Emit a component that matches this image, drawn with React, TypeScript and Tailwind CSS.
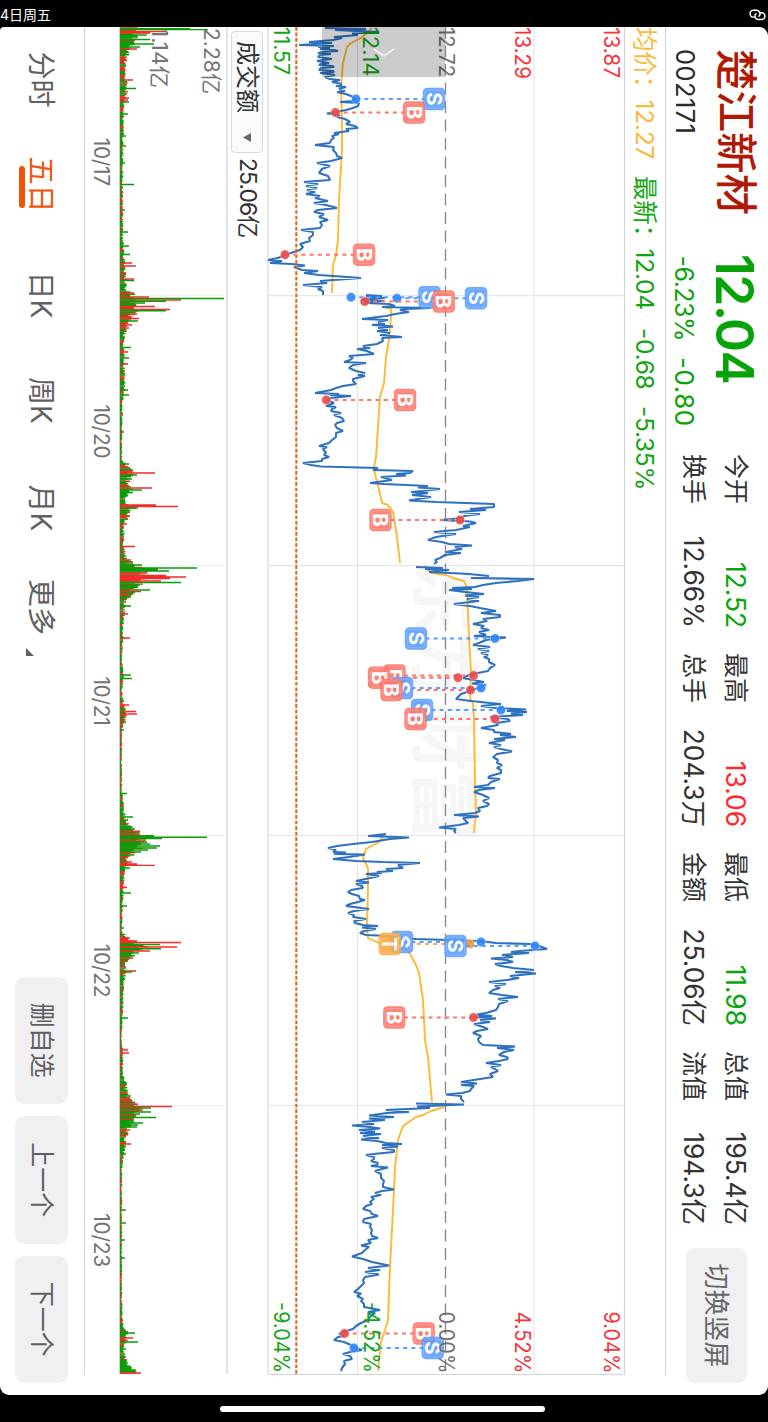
import React from 'react';

type Pt = [number, number];
type Side = 'B' | 'S' | 'T';

const START = 27;
const CHART_TOP = 625;

// Each session is a list of [time offset, price level] samples.
const PRICE: Pt[][] = [
  [
    [28, 325], [29, 366], [30, 335], [32, 379], [33.5, 352], [35, 358], [37, 334], [38, 342], [40, 333], [42, 309], [43, 332], [45, 299], [46, 334], [47, 318], [48, 330], [49, 320], [50, 334], [51, 338], [52, 322], [53, 318], [54, 331], [55, 320], [57, 318], [59, 332], [60, 322], [61, 317], [63, 329], [64, 321], [65, 319], [66, 332], [67, 334], [68, 321], [70, 319], [71, 333], [72, 334], [73, 320], [75, 335], [77, 325], [79, 330], [80, 340], [82, 332], [84, 342], [86, 336], [87, 346], [89, 339], [91, 345], [92, 337], [94, 346], [96, 351], [99, 356], [101, 352], [102, 340], [103, 359], [106, 358], [108, 353], [110, 346], [112, 336], [113.5, 327], [115, 340], [117, 337], [119, 345], [122, 350], [124, 346], [126, 355], [128, 358], [129, 346], [131, 349], [133, 334], [134, 339], [136, 332], [138, 334], [140, 331], [143, 330], [145, 315], [147, 334], [150, 333], [153, 336], [156, 337], [158, 342], [161, 331], [163, 317], [166, 330], [169, 322], [173, 319], [176, 328], [180, 330], [182, 304], [184, 318], [186, 306], [188, 317], [190, 307], [192, 315], [194, 306], [196, 320], [198, 315], [201, 328], [203, 314], [205, 326], [208, 337], [210, 318], [212, 314], [214, 324], [217, 319], [220, 328], [222, 320], [225, 322], [228, 320], [230, 301], [232, 313], [235, 313], [238, 309], [241, 310], [244, 300], [247, 303], [250, 300], [252, 294], [255, 285], [258, 278], [260, 268], [261, 282], [263, 270], [264, 292], [265.5, 305], [267, 294], [270, 302], [271, 318], [273, 304], [275, 319], [278, 361], [281, 320], [283, 327], [285, 303], [287, 322], [289, 318], [291, 323], [295, 323],
  ],
  [
    [295, 366], [296, 382], [297, 366], [298, 385], [300, 362], [301, 384], [303, 366], [304, 389], [306, 395], [307, 382], [308, 431], [309, 405], [310, 400], [312, 409], [314, 395], [316, 386], [319, 362], [320, 388], [322, 378], [324, 385], [325, 372], [326.5, 393], [328, 378], [330, 388], [331, 377], [333, 390], [335, 380], [337, 402], [338, 382], [341, 383], [344, 377], [346, 363], [348, 370], [349, 357], [351, 367], [354, 374], [356, 349], [358, 353], [360, 350], [362, 344], [363, 366], [365, 353], [368, 349], [371, 356], [373, 365], [375, 358], [376, 365], [379, 353], [381, 353], [384, 356], [386, 343], [388, 336], [390, 331], [393, 315], [394, 339], [395, 330], [396, 351], [398, 331], [400, 327], [403, 334], [406, 326], [407, 336], [409, 332], [411, 331], [413, 341], [415, 334], [418, 342], [421, 344], [423, 337], [425, 335], [428, 337], [431, 343], [433, 336], [437, 336], [440, 332], [443, 329], [446, 319], [447, 327], [449, 323], [453, 326], [455, 324], [457, 329], [459, 322], [461, 322], [463, 303], [465, 311], [466.5, 321], [468, 378], [470, 373], [471, 413], [473, 410], [474, 396], [475.5, 406], [477, 381], [480, 392], [483, 370], [484, 384], [486, 428], [487.5, 418], [489, 440], [491, 422], [492, 411], [493, 428], [495, 412], [497, 431], [499, 418], [500.5, 409], [502, 436], [504, 494], [507, 494], [509, 470], [510, 486], [512, 459], [514, 480], [516, 464], [518, 462], [520, 441], [521.5, 470], [523, 476], [526, 463], [527, 470], [530, 456], [532, 434], [534, 456], [537, 436], [540, 428], [542, 442], [544, 449], [545.5, 472], [547, 455], [549, 462], [552, 446], [553, 461], [555, 445], [558, 440], [560, 435], [562, 437], [564, 434],
  ],
  [
    [567, 416], [568, 443], [569, 425], [570, 449], [572, 429], [573, 450], [574, 469], [576, 489], [578, 471], [579, 534], [581, 518], [583, 496], [585, 483], [587, 475], [588, 452], [589, 472], [590, 449], [592, 465], [594, 484], [595.5, 465], [597, 479], [599, 467], [601, 479], [604, 454], [606, 470], [608, 480], [611, 496], [613, 481], [615, 500], [617, 500], [619, 483], [621, 487], [624, 473], [626, 484], [628, 481], [630, 489], [632, 479], [635, 486], [636, 474], [637.5, 506], [640, 486], [643, 479], [645, 473], [647, 490], [649, 478], [651, 489], [653, 481], [655, 488], [657, 484], [659, 489], [662, 489], [665, 495], [668, 490], [671, 488], [673, 478], [675, 469], [678, 463], [680, 473], [682, 484], [683.5, 472], [685, 486], [688, 478], [691, 470], [694, 461], [697, 458], [699, 456], [701, 471], [703, 490], [704, 501], [706, 481], [708, 496], [709.5, 526], [711, 507], [712, 527], [713.5, 511], [715, 523], [717, 490], [719, 508], [721, 510], [723, 496], [725, 498], [728, 481], [730, 494], [732, 494], [734, 511], [735, 500], [737, 516], [739, 494], [740, 505], [743, 489], [745, 501], [747, 494], [749, 501], [751.5, 512], [754, 497], [757, 493], [760, 498], [763, 497], [765, 502], [768, 497], [770, 501], [773, 501], [776, 490], [778, 488], [779, 500], [782, 491], [785, 488], [787, 474], [788, 495], [790, 479], [792, 474], [795, 483], [798, 489], [801, 483], [804, 489], [806, 487], [808, 478], [811, 480], [813, 475], [815, 454], [816.5, 479], [818, 463], [820, 465], [823, 468], [825, 459], [827.5, 439], [829, 456], [831, 454], [833, 456],
  ],
  [
    [834, 386], [836, 368], [837.5, 409], [839, 390], [842, 372], [844, 353], [846, 337], [848, 328], [850, 336], [852, 333], [852.5, 346], [854, 334], [854.5, 365], [857, 349], [859, 333], [861, 356], [862, 383], [863, 420], [865, 398], [868, 403], [869, 386], [871, 393], [872, 377], [873, 382], [874, 366], [876, 379], [878, 370], [881, 356], [882.5, 369], [884, 356], [886, 362], [888, 363], [890, 351], [892, 348], [894, 352], [896, 359], [899, 360], [900, 365], [902, 358], [904, 350], [906, 346], [909, 369], [911, 354], [913, 348], [915, 354], [917, 353], [919, 366], [921, 354], [923, 355], [925, 363], [926, 378], [927.5, 362], [929, 376], [931, 364], [933, 360], [935, 366], [936, 390], [938, 391], [939, 416], [941, 480], [943, 496], [944, 530], [946, 539], [949, 547], [951, 520], [952, 511], [953, 529], [955, 502], [957, 513], [958.5, 491], [960, 507], [962, 513], [964, 495], [966, 501], [968, 513], [970, 534], [972, 515], [973.5, 536], [976, 510], [978, 519], [980, 507], [982, 489], [984, 506], [986, 495], [988, 500], [990, 493], [993, 489], [995, 502], [997, 518], [999, 498], [1001, 508], [1004, 499], [1007, 498], [1010, 496], [1013, 486], [1014.5, 477], [1016, 492], [1017, 474], [1018.5, 496], [1020, 480], [1022, 490], [1024, 474], [1027, 483], [1029, 488], [1031, 477], [1033, 473], [1036, 481], [1039, 478], [1042, 479], [1045, 483], [1046.5, 515], [1048, 497], [1050, 514], [1052, 504], [1055, 499], [1057, 507], [1059, 508], [1061, 499], [1063, 486], [1065, 501], [1067, 491], [1069, 495], [1071, 498], [1074, 490], [1077, 493], [1079, 480], [1082, 461], [1083.5, 477], [1085, 461], [1086, 474], [1089, 471], [1091, 470], [1093, 462], [1094.5, 446], [1096, 461], [1099, 461], [1102, 464],
  ],
  [
    [1103.5, 416], [1104.5, 464], [1106.5, 417], [1108, 430], [1110, 386], [1112, 409], [1113, 387], [1115.5, 369], [1117, 394], [1118.5, 369], [1120, 385], [1122, 362], [1124, 374], [1125.5, 352], [1127, 370], [1128.5, 380], [1130, 359], [1131.5, 375], [1133, 360], [1134, 381], [1136, 363], [1138, 379], [1139.5, 361], [1141, 377], [1143, 386], [1144, 402], [1145, 382], [1146.5, 398], [1148, 382], [1150, 394], [1152, 394], [1153.5, 378], [1155, 366], [1157, 374], [1159, 374], [1161, 371], [1163, 378], [1165, 377], [1166, 371], [1167.5, 388], [1169, 382], [1171, 375], [1174, 381], [1178, 381], [1181, 384], [1184, 383], [1187, 383], [1189.5, 394], [1191, 382], [1193, 375], [1195, 381], [1197, 371], [1199, 374], [1202, 370], [1204, 372], [1206, 366], [1209, 363], [1211, 370], [1214, 372], [1216, 378], [1219, 364], [1222, 363], [1224, 371], [1227, 370], [1230, 372], [1233, 371], [1236, 372], [1238, 378], [1240, 368], [1243, 371], [1245.5, 361], [1247, 369], [1250, 365], [1253, 362], [1256.5, 352], [1259, 363], [1262, 372], [1265.5, 389], [1268, 368], [1270, 380], [1272, 365], [1274.5, 379], [1277, 365], [1280, 363], [1283, 364], [1286, 361], [1289, 358], [1292, 354], [1293.5, 361], [1296, 357], [1299, 363], [1301, 361], [1304, 364], [1307, 364], [1308.5, 372], [1310, 380], [1312, 368], [1313, 375], [1317, 370], [1320, 368], [1323, 361], [1326, 356], [1329, 353], [1332, 343], [1334, 339], [1336, 344], [1337, 338], [1340, 334], [1342, 344], [1345, 351], [1347, 353], [1350, 362], [1352, 350], [1354, 343], [1356, 350], [1359, 352], [1361, 344], [1364, 345], [1368, 342], [1371, 341],
  ],
];

const AVERAGE: Pt[][] = [
  [[28, 372], [32, 368], [38, 361], [43, 351], [47, 347], [55, 345], [63, 343], [87, 341], [117, 342], [150, 342], [200, 339], [240, 338], [255, 336], [265, 333], [293, 332]],
  [[307, 384], [309, 391], [316, 391], [340, 389], [357, 386], [383, 384], [397, 380], [427, 378], [457, 376], [467, 374], [474, 375], [485, 378], [503, 382], [505, 388], [512, 393], [537, 397], [563, 400]],
  [[566, 424], [573, 431], [575, 446], [578, 453], [581, 464], [588, 467], [613, 468], [637, 469], [673, 471], [697, 470], [704, 473], [717, 474], [780, 475], [813, 476], [833, 474]],
  [[834, 385], [842, 379], [849, 366], [858, 363], [868, 368], [887, 368], [927, 367], [938, 368], [943, 379], [945, 399], [952, 409], [965, 416], [973, 419], [1000, 423], [1040, 425], [1057, 428], [1102, 432]],
  [[1107, 444], [1111, 431], [1115, 423], [1117, 416], [1126, 403], [1140, 398], [1167, 395], [1210, 393], [1267, 390], [1320, 388], [1330, 385], [1342, 381], [1371, 378]],
];

const MARKERS: { side: Side; at: number; badge: number; dot: number }[] = [
  { side: 'S', at: 99, badge: 434, dot: 356 },
  { side: 'B', at: 112.5, badge: 414, dot: 335.5 },
  { side: 'B', at: 254.7, badge: 364, dot: 285 },
  { side: 'S', at: 297.2, badge: 429.5, dot: 351 },
  { side: 'S', at: 298.2, badge: 476, dot: 397 },
  { side: 'B', at: 301.5, badge: 443.7, dot: 364.7 },
  { side: 'B', at: 400, badge: 405, dot: 326.3 },
  { side: 'B', at: 520, badge: 380.5, dot: 460 },
  { side: 'S', at: 638.5, badge: 416, dot: 495 },
  { side: 'B', at: 675.5, badge: 394.5, dot: 473.5 },
  { side: 'B', at: 677.7, badge: 379, dot: 458 },
  { side: 'S', at: 688, badge: 402, dot: 481 },
  { side: 'B', at: 690, badge: 391.5, dot: 470.5 },
  { side: 'S', at: 710, badge: 422, dot: 501 },
  { side: 'B', at: 719, badge: 415.5, dot: 495 },
  { side: 'S', at: 942, badge: 402, dot: 481 },
  { side: 'T', at: 944, badge: 389.7, dot: 470 },
  { side: 'S', at: 946, badge: 455.5, dot: 535 },
  { side: 'B', at: 1017.5, badge: 394.3, dot: 473.5 },
  { side: 'B', at: 1333.5, badge: 423.7, dot: 344.5 },
  { side: 'S', at: 1348, badge: 432.7, dot: 354 },
];

const SIDE_FILL: Record<Side, string> = { B: '#fd7568', S: '#5a9dfe', T: '#fca942' };
const SIDE_DOT: Record<Side, string> = { B: '#ea4a48', S: '#2f86fb', T: '#f29a38' };

// Typical turnover level over time, and the bars that stand out from it.
const VOLUME_LEVEL: Pt[] = [
  [28, 18], [40, 15], [50, 10], [60, 6], [95, 7], [110, 4], [150, 3], [200, 3], [240, 3], [265, 5], [278, 6], [290, 6], [296, 16], [312, 16], [325, 8], [340, 4], [390, 5], [400, 3], [440, 2], [460, 2], [465, 6], [472, 14], [480, 9], [490, 11], [500, 5], [508, 14], [515, 9], [525, 4], [545, 4], [558, 6], [563, 12], [570, 26], [580, 23], [590, 16], [600, 6], [620, 4], [660, 2], [680, 4], [690, 2], [705, 4], [715, 7], [730, 2], [790, 2], [815, 5], [820, 5], [829, 14], [836, 25], [850, 20], [858, 8], [870, 5], [900, 3], [930, 2], [938, 7], [945, 26], [952, 18], [962, 6], [975, 5], [985, 4], [1010, 3], [1040, 1.5], [1050, 3], [1075, 3], [1085, 6], [1097, 9], [1106, 22], [1118, 15], [1128, 9], [1140, 6], [1155, 4], [1170, 2], [1300, 2], [1325, 3], [1332, 8], [1340, 7], [1348, 3], [1358, 6], [1366, 9], [1370, 15], [1374, 15],
];

const RISES: Pt[] = [
  [31.5, 45], [33, 30], [49, 17], [80, 13], [98, 9], [100, 8], [263, 12], [266, 16], [273, 6], [279, 14], [293, 14], [297, 29], [300, 61], [306.5, 35], [309.5, 50], [314, 17], [318.5, 19], [325, 12], [328, 9], [352, 8], [364, 8], [432, 4], [467, 8], [471, 13], [473, 35], [488, 32], [505, 36], [506.5, 58], [516, 10], [524, 7], [546.5, 15], [560, 11], [573, 27], [575.5, 46], [577, 66], [578.5, 50], [581, 41], [591.5, 21], [594, 9], [614, 8], [638, 10], [705, 9], [711.5, 16], [714, 17], [831.5, 20], [834, 20], [840, 26], [862, 12], [864, 17], [865.3, 35], [887.5, 7], [938, 10], [941, 17], [942.5, 61], [947, 57], [951, 30], [958, 13], [971, 16], [1050, 8], [1053, 9], [1099, 10], [1101, 12], [1104, 17], [1106.5, 52], [1110, 23], [1119, 14], [1130, 10], [1144, 11], [1338, 13], [1373, 21],
];

const FALLS: Pt[] = [
  [28.6, 70], [29.6, 88], [35, 27], [39.5, 30], [44, 34], [47, 20], [88.5, 16], [102, 9], [114, 8], [136, 6], [146, 6], [163, 5], [184.5, 14], [210, 5], [232, 8], [246, 9], [254.5, 10], [280.5, 14], [298.5, 104], [301.2, 46], [303, 25], [310.8, 46], [321, 18], [347.5, 11], [358, 9], [390, 8], [395, 9], [464, 9], [475, 17], [479, 12], [490, 22], [492.5, 13], [508, 18], [512, 10], [556, 6], [562, 13], [565, 22], [568, 77], [569.5, 38], [571, 49], [582.5, 61], [585, 20], [587, 18], [590, 30], [597, 11], [606, 11], [675, 11], [678.5, 12], [722, 6], [730, 4], [793.5, 7], [817, 13], [820, 8], [827, 12], [829, 15], [835.7, 34], [837.3, 87], [838.5, 42], [842, 27], [844, 30], [846, 40], [848, 37], [850, 28], [852, 21], [855, 14], [868, 10], [893, 11], [906, 7], [928, 4], [944.5, 40], [948.7, 41], [953, 19], [956, 12], [972, 12], [1018, 8], [1083, 7], [1096, 11], [1108, 31], [1112, 31], [1114, 20], [1117.5, 36], [1121, 14], [1123, 23], [1125, 18], [1127, 17], [1154, 6], [1210, 6], [1223, 6], [1240, 5], [1258, 5], [1333, 15], [1342, 18], [1349, 6], [1368, 12], [1370, 16],
];

const levelAt = (t: number): number => {
  for (let i = 1; i < VOLUME_LEVEL.length; i++) {
    const [t1, v1] = VOLUME_LEVEL[i];
    if (t <= t1) {
      const [t0, v0] = VOLUME_LEVEL[i - 1];
      return v0 + ((v1 - v0) * (t - t0)) / (t1 - t0);
    }
  }
  return 2;
};

const noise = (n: number): number => {
  const s = Math.sin(n * 127.1 + 11.7) * 43758.5453;
  return s - Math.floor(s);
};

const tickBars = () => {
  const up: string[] = [];
  const down: string[] = [];
  for (let i = 0; i < 1203; i++) {
    const t = 28 + i * 1.119;
    const h = levelAt(t) * (0.6 + 0.55 * noise(i));
    const cmd = `M${(t - START).toFixed(2)} 108v${(-h).toFixed(1)}`;
    (noise(i + 5000) < 0.38 ? up : down).push(cmd);
  }
  return { up: up.join(''), down: down.join('') };
};

const bars = (list: Pt[]) => list.map(([t, h]) => `M${(t - START).toFixed(1)} 108v${-h}`).join('');
const line = (pts: Pt[]) => pts.map(([t, v]) => `${t - START},${CHART_TOP - v}`).join(' ');

const DAY_BREAKS = [268.7, 538.6, 808.5, 1078.5];

interface LabelProps {
  x: number;
  y: number;
  w: number;
  fill: string;
  children: string;
}

const AxisLabel = ({ x, y, w, fill, children }: LabelProps) => (
  <text x={x} y={y} fill={fill} textLength={w} lengthAdjust="spacingAndGlyphs" className="text-[21px]">
    {children}
  </text>
);

const PriceChart = () => (
  <svg width="1368" height="358" viewBox="0 0 1368 358" className="block shrink-0 overflow-visible">
    <text x="535" y="206" fill="#f6f6f6" textLength="279" className="text-[71px] font-bold">东方财富</text>
    <g stroke="#e4e6ee" strokeWidth="1.2" fill="none">
      <path d="M0 91H1347M0 267.5H1347" />
      {DAY_BREAKS.map((x) => (
        <path key={x} d={`M${x} 1V356`} />
      ))}
    </g>
    <path d="M0 357H1347" stroke="#e6e8ec" strokeWidth="2" />
    <path d="M0 .5H1347.5V357" stroke="#cfd5db" strokeWidth="1.2" fill="none" />
    <path d="M0 179.5H1347" stroke="#8b8b8b" strokeWidth="1.4" strokeDasharray="12 6.5" />
    {AVERAGE.map((s, i) => (
      <polyline key={i} points={line(s)} fill="none" stroke="#feb931" strokeWidth="1.9" strokeLinejoin="round" />
    ))}
    {PRICE.map((s, i) => (
      <polyline key={i} points={line(s)} fill="none" stroke="#2e72bf" strokeWidth="2.1" strokeLinejoin="bevel" />
    ))}
    <path d="M0 328.7H1347" stroke="#f25a0c" strokeWidth="2" strokeDasharray="3.7 1.85" />
    {MARKERS.map(({ side, at, badge, dot }) => {
      const x = at - START;
      const by = CHART_TOP - badge;
      const dy = CHART_TOP - dot;
      return (
        <g key={`${side}${at}`}>
          <path d={`M${x} ${dy}V${by}`} stroke={SIDE_FILL[side]} strokeWidth="1.9" strokeDasharray="4 4.2" />
          <circle cx={x} cy={dy} r="4.7" fill={SIDE_DOT[side]} fillOpacity=".9" stroke="#fff" strokeOpacity=".5" strokeWidth=".8" />
        </g>
      );
    })}
    {MARKERS.map(({ side, at, badge }) => {
      const x = at - START;
      const y = CHART_TOP - badge;
      return (
        <g key={`${side}${at}`} opacity=".88">
          <rect x={x - 11.2} y={y - 11.2} width="22.4" height="22.4" rx="4.5" fill={SIDE_FILL[side]} />
          <rect x={x - 9} y={y - 9} width="18" height="18" rx="3" fill="none" stroke="#fff" strokeOpacity=".18" />
          <text x={x} y={y + 7.3} textAnchor="middle" fill="#fff" className="text-[20.5px] font-bold">
            {side}
          </text>
        </g>
      );
    })}
    <AxisLabel x={0} y={21} w={51} fill="#f5333a">13.87</AxisLabel>
    <AxisLabel x={0} y={110.5} w={52} fill="#f5333a">13.29</AxisLabel>
    <AxisLabel x={0} y={186.5} w={50} fill="#6f6f6f">12.72</AxisLabel>
    <AxisLabel x={0} y={262} w={49.5} fill="#12a512">12.14</AxisLabel>
    <AxisLabel x={0} y={351.5} w={48} fill="#12a512">11.57</AxisLabel>
    <AxisLabel x={1284.5} y={21} w={62} fill="#f5333a">9.04%</AxisLabel>
    <AxisLabel x={1284.5} y={110} w={62} fill="#f5333a">4.52%</AxisLabel>
    <AxisLabel x={1284.5} y={186.5} w={62} fill="#6f6f6f">0.00%</AxisLabel>
    <AxisLabel x={1275} y={261.5} w={71} fill="#12a512">-4.52%</AxisLabel>
    <AxisLabel x={1275} y={351} w={71} fill="#12a512">-9.04%</AxisLabel>
  </svg>
);

const VolumeChart = () => {
  const ticks = tickBars();
  return (
    <svg width="1368" height="109" viewBox="0 0 1368 109" className="block shrink-0 overflow-visible">
      <path d="M0 1H1347" stroke="#e2e5e9" strokeWidth="2" />
      <path d="M0 108.5H1347" stroke="#c9ced4" />
      <g stroke="#ececf4" strokeWidth="1">
        {DAY_BREAKS.map((x) => (
          <path key={x} d={`M${x} 4V108`} />
        ))}
      </g>
      <AxisLabel x={1} y={24} w={66} fill="#757575">2.28亿</AxisLabel>
      <AxisLabel x={1} y={76.5} w={60} fill="#757575">1.14亿</AxisLabel>
      <path d={ticks.up} stroke="#ff2525" strokeWidth="1.4" />
      <path d={ticks.down} stroke="#0b9d08" strokeWidth="1.5" />
      <path d={bars(RISES)} stroke="#f82a2a" strokeWidth="1.3" />
      <path d={bars(FALLS)} stroke="#0b9d08" strokeWidth="1.4" />
    </svg>
  );
};

const STATS = [
  { label: '今开', value: '12.52', tone: 'text-[#0ba50b]' },
  { label: '最高', value: '13.06', tone: 'text-[#ff2b2b]' },
  { label: '最低', value: '11.98', tone: 'text-[#0ba50b]' },
  { label: '总值', value: '195.4亿', tone: 'text-[#333]' },
  { label: '换手', value: '12.66%', tone: 'text-[#333]' },
  { label: '总手', value: '204.3万', tone: 'text-[#333]' },
  { label: '金额', value: '25.06亿', tone: 'text-[#333]' },
  { label: '流值', value: '194.3亿', tone: 'text-[#333]' },
];

const Header = () => (
  <header className="flex h-[103px] w-[1348px] shrink-0 border-b border-[#cfd2d6] pl-[22px]">
    <div className="flex w-[205px] shrink-0 flex-col">
      <h1 className="mt-[9px] h-[46px] text-[41.5px] leading-[46px] font-medium whitespace-nowrap text-[#ae1a05]">楚江新材</h1>
      <div className="mt-[14px] h-[28px] text-[25.5px] leading-[28px] tracking-[0.4px] text-[#2b2b2b]">002171</div>
    </div>
    <div className="flex w-[200px] shrink-0 flex-col text-[#08a308]">
      <div className="mt-[5px] h-[56px] text-[51.5px] leading-[56px] font-semibold tracking-[-1.6px]">12.04</div>
      <div className="mt-[9px] flex h-[28px] gap-[16px] pl-[1.5px] leading-[28px]">
        <span className="text-[25px] tracking-[-0.5px]">-6.23%</span>
        <span className="text-[26px] tracking-[0.5px]">-0.80</span>
      </div>
    </div>
    <div className="mt-[15px] grid h-[78px] shrink-0 grid-cols-[174px_174px_174px_174px] grid-rows-[36px_36px] gap-x-[25px] gap-y-[6px]">
      {STATS.map((s) => (
        <div key={s.label} className="flex items-center justify-between whitespace-nowrap">
          <span className="text-[25px] text-[#333]">{s.label}</span>
          <span className={`text-[26.5px] tracking-[-0.1px] ${s.tone}`}>{s.value}</span>
        </div>
      ))}
    </div>
    <button className="mt-[21px] ml-[23px] h-[61px] w-[135px] shrink-0 rounded-[9px] bg-[#f0f0f3] text-[26px] text-[#666]">切换竖屏</button>
  </header>
);

const TABS = [
  { name: '分时', width: 'w-[105px]' },
  { name: '五日', width: 'w-[105px]', active: true },
  { name: '日K', width: 'w-[116px]' },
  { name: '周K', width: 'w-[95px]' },
  { name: '月K', width: 'w-[120px]' },
  { name: '更多', width: 'w-[78px]', more: true },
];

const Footer = () => (
  <footer className="flex h-[84px] shrink-0 items-start">
    {TABS.map((t) => (
      <div key={t.name} className={`relative flex h-[84px] shrink-0 justify-center text-[28px] leading-[36px] ${t.width} ${t.active ? 'text-[#f05408]' : 'text-[#606060]'}`}>
        <span className="mt-[25px] whitespace-nowrap">{t.name}</span>
        {t.active && <span className="absolute top-[59px] left-[34px] h-[6px] w-[42px] rounded-full bg-[#f05408]" />}
        {t.more && (
          <svg className="absolute top-[50px] left-[80px]" width="8" height="8" viewBox="0 0 8 8">
            <path d="M8 0V8H0Z" fill="#606060" />
          </svg>
        )}
      </div>
    ))}
    <div className="mt-[16px] mr-[12px] ml-auto flex gap-[12px]">
      {['删自选', '上一个', '下一个'].map((b) => (
        <button key={b} className="h-[53px] w-[127.5px] rounded-[9px] bg-[#f0f0f3] text-[25px] text-[#5f5f5f]">
          {b}
        </button>
      ))}
    </div>
  </footer>
);

export default function App() {
  return (
    <div className="flex h-[1422px] w-[768px] flex-col overflow-hidden bg-black font-['Inter','Noto_Sans_CJK_SC',sans-serif]">
      <div className="flex h-[27px] shrink-0 items-center justify-between pt-[3px] pr-[2px] text-[14px] leading-none text-white">
        <span>4日周五</span>
        <svg width="17" height="12" viewBox="0 0 16 11" fill="none" stroke="#fff" strokeWidth="1.4" strokeLinecap="round">
          <path d="M5.6 7.5H4.2a3.2 3.2 0 0 1 0-6.4h3a3.2 3.2 0 0 1 2.2 5.5" />
          <path d="M10.4 3.4h1.4a3.2 3.2 0 0 1 0 6.4h-3a3.2 3.2 0 0 1-2.2-5.5" />
        </svg>
      </div>
      <div className="relative h-[1368px] w-[768px] shrink-0 overflow-hidden rounded-[9px] rounded-tl-[4px] bg-white">
        <main className="flex h-[768px] w-[1368px] origin-top-left translate-x-[768px] rotate-90 flex-col">
          <Header />
          <div className="flex h-[40px] shrink-0 items-center text-[24.5px] tracking-[-0.3px] whitespace-nowrap text-[#12a512]">
            <span className="w-[149px] text-[#fdb93e]">均价：12.27</span>
            <span className="w-[152px]">最新：12.04</span>
            <span className="w-[78px]">-0.68</span>
            <span>-5.35%</span>
          </div>
          <PriceChart />
          <div className="flex h-[39px] shrink-0 items-center pl-[4px]">
            <button className="flex h-[32px] w-[122px] items-center gap-[20px] rounded-[4px] border border-[#d5dadf] bg-[#f8fafb] pl-[9px] text-[24px] leading-none text-[#333]">
              成交额
              <svg width="9" height="8" viewBox="0 0 9 8">
                <path d="M0 0H9L4.5 8Z" fill="#666" />
              </svg>
            </button>
            <span className="ml-[5px] text-[23px] tracking-[-1px] text-[#333]">25.06亿</span>
          </div>
          <VolumeChart />
          <div className="flex h-[35px] w-[1348px] shrink-0 border-b border-[#d3d6da]">
            {['10/17', '10/20', '10/21', '10/22', '10/23'].map((d) => (
              <span key={d} className="flex-1 text-center text-[21px] leading-[35px] tracking-[-0.3px] text-[#737373]">
                {d}
              </span>
            ))}
          </div>
          <Footer />
        </main>
        <div className="absolute top-0 left-[322px] flex h-[50px] w-[123px] justify-center bg-black/20 pt-[21px]">
          <svg width="22" height="9" viewBox="0 0 22 9" fill="none" stroke="#fff" strokeWidth="1.4">
            <path d="M1 1L11 8L21 1" />
          </svg>
        </div>
      </div>
      <div className="mt-[11px] ml-[220px] h-[6px] w-[325px] shrink-0 rounded-full bg-white" />
    </div>
  );
}
